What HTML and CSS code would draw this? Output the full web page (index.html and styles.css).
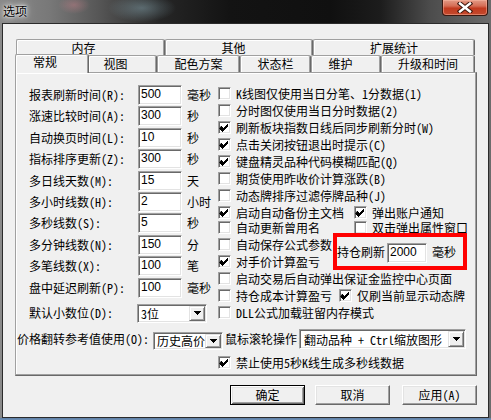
FILE: index.html
```html
<!DOCTYPE html>
<html>
<head>
<meta charset="utf-8">
<title>选项</title>
<link rel="stylesheet" href="styles.css">
</head>
<body>
<div class="window">
  <div class="titlebar">
    <span class="title">选项</span>
    <div class="close">
      <svg width="16" height="11" viewBox="0 0 16 11"><path d="M3 1.5 L13 9.5 M13 1.5 L3 9.5" stroke="#3b160d" stroke-width="4.4" stroke-linecap="square"/><path d="M3 1.5 L13 9.5 M13 1.5 L3 9.5" stroke="#fff" stroke-width="2.4" stroke-linecap="square"/></svg>
    </div>
  </div>
  <div class="client">
    <div class="tabs">
      <div class="tabrow row1">
        <div class="tab short">内存</div>
        <div class="tab short2">其他</div>
        <div class="tab">扩展统计</div>
      </div>
      <div class="tabrow row2">
        <div class="tab sel short">常规</div>
        <div class="tab short">视图</div>
        <div class="tab">配色方案</div>
        <div class="tab">状态栏</div>
        <div class="tab short2">维护</div>
        <div class="tab">升级和时间</div>
      </div>
      <div class="panel">
        <div class="cols">
          <div class="fields">
            <div class="frow"><span class="flabel">报表刷新时间(R):</span><span class="edit">500</span><span class="unit">毫秒</span></div>
            <div class="frow"><span class="flabel">涨速比较时间(A):</span><span class="edit">300</span><span class="unit">秒</span></div>
            <div class="frow"><span class="flabel">自动换页时间(L):</span><span class="edit">10</span><span class="unit">秒</span></div>
            <div class="frow"><span class="flabel">指标排序更新(Z):</span><span class="edit">300</span><span class="unit">秒</span></div>
            <div class="frow"><span class="flabel">多日线天数(M):</span><span class="edit">15</span><span class="unit">天</span></div>
            <div class="frow"><span class="flabel">多小时线数(H):</span><span class="edit">2</span><span class="unit">小时</span></div>
            <div class="frow"><span class="flabel">多秒线数(S):</span><span class="edit">5</span><span class="unit">秒</span></div>
            <div class="frow"><span class="flabel">多分钟线数(N):</span><span class="edit">150</span><span class="unit">分</span></div>
            <div class="frow"><span class="flabel">多笔线数(X):</span><span class="edit">100</span><span class="unit">笔</span></div>
            <div class="frow"><span class="flabel">盘中延迟刷新(P):</span><span class="edit">100</span><span class="unit">毫秒</span></div>
            <div class="frow drow"><span class="flabel">默认小数位(D):</span><span class="combo c-dec"><span class="ctext">3位</span><span class="dd"><svg width="7" height="4" viewBox="0 0 7 4"><path d="M0 0h7v1h-1v1h-1v1h-1v1h-1v-1h-1v-1h-1v-1h-1z"/></svg></span></span></div>
          </div>
          <div class="checks">
            <div class="crow"><label class="ck"><span class="cb"></span>K线图仅使用当日分笔、1分数据(1)</label></div>
            <div class="crow"><label class="ck"><span class="cb"></span>分时图仅使用当日分时数据(2)</label></div>
            <div class="crow"><label class="ck"><span class="cb"><svg class="mark" viewBox="0 0 13 13"><path d="M3 5h1v1h1v1h1v-1h1v-1h1v-1h1v-1h1v3h-1v1h-1v1h-1v1h-1v1h-1v1h-1v-1h-1v-1h-1v-1h-1z"/></svg></span>刷新板块指数日线后同步刷新分时(W)</label></div>
            <div class="crow"><label class="ck"><span class="cb"><svg class="mark" viewBox="0 0 13 13"><path d="M3 5h1v1h1v1h1v-1h1v-1h1v-1h1v-1h1v3h-1v1h-1v1h-1v1h-1v1h-1v1h-1v-1h-1v-1h-1v-1h-1z"/></svg></span>点击关闭按钮退出时提示(C)</label></div>
            <div class="crow"><label class="ck"><span class="cb"><svg class="mark" viewBox="0 0 13 13"><path d="M3 5h1v1h1v1h1v-1h1v-1h1v-1h1v-1h1v3h-1v1h-1v1h-1v1h-1v1h-1v1h-1v-1h-1v-1h-1v-1h-1z"/></svg></span>键盘精灵品种代码模糊匹配(Q)</label></div>
            <div class="crow"><label class="ck"><span class="cb"></span>期货使用昨收价计算涨跌(B)</label></div>
            <div class="crow"><label class="ck"><span class="cb"></span>动态牌排序过滤停牌品种(J)</label></div>
            <div class="crow"><label class="ck w136"><span class="cb"><svg class="mark" viewBox="0 0 13 13"><path d="M3 5h1v1h1v1h1v-1h1v-1h1v-1h1v-1h1v3h-1v1h-1v1h-1v1h-1v1h-1v1h-1v-1h-1v-1h-1v-1h-1z"/></svg></span>启动自动备份主文档</label><label class="ck"><span class="cb"><svg class="mark" viewBox="0 0 13 13"><path d="M3 5h1v1h1v1h1v-1h1v-1h1v-1h1v-1h1v3h-1v1h-1v1h-1v1h-1v1h-1v1h-1v-1h-1v-1h-1v-1h-1z"/></svg></span>弹出账户通知</label></div>
            <div class="crow r9"><label class="ck w136"><span class="cb"></span>自动更新曾用名</label><label class="ck"><span class="cb"></span>双击弹出属性窗口</label></div>
            <div class="crow"><label class="ck"><span class="cb"></span>自动保存公式参数</label></div>
            <div class="crow"><label class="ck"><span class="cb"><svg class="mark" viewBox="0 0 13 13"><path d="M3 5h1v1h1v1h1v-1h1v-1h1v-1h1v-1h1v3h-1v1h-1v1h-1v1h-1v1h-1v1h-1v-1h-1v-1h-1v-1h-1z"/></svg></span>对手价计算盈亏</label></div>
            <div class="crow"><label class="ck"><span class="cb"></span>启动交易后自动弹出保证金监控中心页面</label></div>
            <div class="crow"><label class="ck"><span class="cb"></span>持仓成本计算盈亏</label><label class="ck gap7"><span class="cb"><svg class="mark" viewBox="0 0 13 13"><path d="M3 5h1v1h1v1h1v-1h1v-1h1v-1h1v-1h1v3h-1v1h-1v1h-1v1h-1v1h-1v1h-1v-1h-1v-1h-1v-1h-1z"/></svg></span>仅刷当前显示动态牌</label></div>
            <div class="crow"><label class="ck"><span class="cb"></span>DLL公式加载驻留内存模式</label></div>
          </div>
        </div>
        <div class="brow">
          <span class="blabel1">价格翻转参考值使用(O):</span>
          <span class="combo c-hist"><span class="ctext">历史高价</span><span class="dd"><svg width="7" height="4" viewBox="0 0 7 4"><path d="M0 0h7v1h-1v1h-1v1h-1v1h-1v-1h-1v-1h-1v-1h-1z"/></svg></span></span>
          <span class="blabel2">鼠标滚轮操作:</span>
          <span class="combo c-wheel"><span class="ctext">翻动品种 + Ctrl缩放图形</span><span class="dd"><svg width="7" height="4" viewBox="0 0 7 4"><path d="M0 0h7v1h-1v1h-1v1h-1v1h-1v-1h-1v-1h-1v-1h-1z"/></svg></span></span>
        </div>
        <div class="crow lastrow"><label class="ck"><span class="cb"><svg class="mark" viewBox="0 0 13 13"><path d="M3 5h1v1h1v1h1v-1h1v-1h1v-1h1v-1h1v3h-1v1h-1v1h-1v1h-1v1h-1v1h-1v-1h-1v-1h-1v-1h-1z"/></svg></span>禁止使用5秒K线生成多秒线数据</label></div>
        <div class="hilite"><span>持仓刷新</span><span class="edit e2000">2000</span><span class="unit">毫秒</span></div>
      </div>
      <div class="buttons">
        <div class="btn def">确定</div>
        <div class="btn b2">取消</div>
        <div class="btn b3">应用(A)</div>
      </div>
    </div>
  </div>
</div>
</body>
</html>
```
FILE: styles.css
```css
* { box-sizing: border-box; }
html, body { margin: 0; padding: 0; }
body {
  width: 491px;
  height: 420px;
  overflow: hidden;
  background: #222;
  color: #000;
  font-family: "Noto Sans Mono CJK SC", "Noto Sans CJK SC", "DejaVu Sans", sans-serif;
  font-size: 12px;
  line-height: 14px;
}
.window {
  width: 491px;
  height: 420px;
  display: flex;
  flex-direction: column;
  background:
    linear-gradient(to top, #6f90b6 0, #5d7ea4 2px, transparent 2px),
    radial-gradient(ellipse 34px 14px at 142px 8px, rgba(130,160,170,.5), transparent),
    radial-gradient(ellipse 16px 9px at 74px 5px, rgba(210,130,140,.4), transparent),
    linear-gradient(90deg, #8a8a8a 0, #787878 50px, #555 100px, #262626 160px, #131313 230px, #101010 330px, #1c1c1c 380px, #4c4c4c 430px, #6c6c6c 491px);
}
.titlebar {
  height: 23px;
  flex: none;
  display: flex;
  justify-content: space-between;
  align-items: flex-start;
}
.title {
  margin: 4px 0 0 3px;
  font-size: 12px;
  line-height: 14px;
  color: #000;
  text-shadow: 0 0 5px #fff, 0 0 8px rgba(255,255,255,.8), 0 0 2px #fff;
}
.close {
  width: 46px;
  height: 16px;
  margin-right: 3px;
  border: 1px solid #3a1810;
  border-top: 0;
  border-radius: 0 0 4px 4px;
  background: linear-gradient(#e29a86 0, #d56d55 40%, #c13a1f 55%, #c44a2e 100%);
  box-shadow: inset 0 0 0 1px rgba(255,190,170,.45);
  display: flex;
  justify-content: center;
  align-items: center;
}
.client {
  flex: 1;
  margin: 0 2px 2px 2px;
  border: 1px solid #2b2b2b;
  background: #f0f0f0;
}
.tabs {
  margin: 15px 0 0 12px;
  width: 462px;
}
.tabrow {
  display: grid;
  margin-left: 1px;
  width: 459px;
}
.row1 { grid-template-columns: 149px 148px 162px; height: 16px; }
.row2 { grid-template-columns: 72px 69px 83px 71px 70px 94px; height: 17px; }
.tab {
  border-top: 1px solid #a0a0a0;
  border-left: 1px solid #a0a0a0;
  border-right: 1px solid #696969;
  border-radius: 2px 2px 0 0;
  box-shadow: inset -1px 0 #a0a0a0, inset 1px 1px #fff;
  background: #f0f0f0;
  text-align: center;
  line-height: 15px;
}
.row2 .tab { line-height: 16px; }
.tab.short { padding-right: 14px; }
.tab.short2 { padding-right: 11px; }
.row2 .tab.sel {
  margin: -1px -1px -1px -1px;
  position: relative;
  z-index: 1;
  line-height: 14px;
}
.panel {
  position: relative;
  height: 304px;
  border: 1px solid;
  border-color: #a0a0a0 #696969 #696969 #a0a0a0;
  box-shadow: inset -1px -1px #a0a0a0, inset 1px 1px #fff;
}
.cols { display: flex; }
.fields {
  width: 202px;
  flex: none;
  padding: 12px 0 0 13px;
  display: flex;
  flex-direction: column;
  gap: 1.4px;
}
.frow {
  display: flex;
  align-items: center;
  height: 20px;
}
.flabel { width: 109px; flex: none; white-space: nowrap; }
.edit {
  display: block;
  width: 44px;
  height: 20px;
  flex: none;
  background: #fff;
  border: 1px solid;
  border-color: #a0a0a0 #fff #fff #a0a0a0;
  box-shadow: inset 1px 1px #696969, inset -1px -1px #e3e3e3;
  padding-left: 2px;
  line-height: 17px;
  font-family: "Liberation Sans", "Noto Sans CJK SC", sans-serif;
}
.unit { margin-left: 5px; white-space: nowrap; }
.drow { margin-top: 5px; height: 19px; }
.combo {
  display: flex;
  align-items: stretch;
  background: #fff;
  border: 1px solid;
  border-color: #a0a0a0 #fff #fff #a0a0a0;
  box-shadow: inset 1px 1px #696969, inset -1px -1px #e3e3e3;
  padding: 1px;
}
.ctext {
  flex: 1;
  padding-left: 2px;
  white-space: nowrap;
  display: flex;
  align-items: center;
  line-height: 13px;
}
.dd {
  width: 16px;
  flex: none;
  background: #f0f0f0;
  border: 1px solid;
  border-color: #e3e3e3 #696969 #696969 #e3e3e3;
  box-shadow: inset 1px 1px #fff, inset -1px -1px #a0a0a0;
  display: flex;
  justify-content: center;
  align-items: center;
}
.c-dec { width: 70px; height: 19px; margin-left: -1px; }
.checks { padding-top: 12px; flex: 1; }
.crow {
  display: flex;
  align-items: center;
  height: 17px;
}
.r9 { margin-top: -2px; }
.ck {
  display: flex;
  align-items: center;
  white-space: nowrap;
  line-height: 13px;
}
.w136 { width: 136px; flex: none; }
.gap7 { margin-left: 7px; }
.cb {
  position: relative;
  width: 13px;
  height: 13px;
  flex: none;
  margin-right: 5px;
  background: #fff;
  border: 1px solid;
  border-color: #a0a0a0 #fff #fff #a0a0a0;
  box-shadow: inset 1px 1px #696969, inset -1px -1px #e3e3e3;
}
.mark {
  position: absolute;
  left: -1px;
  top: -1px;
  width: 13px;
  height: 13px;
}
.brow {
  display: flex;
  align-items: center;
  height: 21px;
  margin-top: 6px;
  padding-left: 1px;
}
.blabel1 { width: 136px; flex: none; white-space: nowrap; }
.c-hist { width: 70px; height: 18px; margin-top: 3px; }
.blabel2 { width: 74px; margin-left: 2px; flex: none; white-space: nowrap; }
.c-wheel { width: 167px; height: 20px; }
.c-wheel .ctext { padding-left: 3px; }
.lastrow { margin-top: 4px; padding-left: 202px; }
.hilite {
  position: absolute;
  left: 317px;
  top: 160px;
  width: 134px;
  height: 37px;
  border: 4px solid #f00;
  display: flex;
  align-items: center;
  white-space: nowrap;
}
.e2000 { width: 40px; margin-left: 2px; margin-top: 2px; }
.buttons {
  display: flex;
  justify-content: flex-end;
  margin-top: 9px;
}
.btn {
  width: 75px;
  height: 20px;
  background: #f0f0f0;
  border: 1px solid;
  border-color: #fff #696969 #696969 #fff;
  box-shadow: inset -1px -1px #a0a0a0, inset 1px 1px #e3e3e3;
  text-align: center;
  line-height: 17px;
}
.btn.def {
  border-color: #000;
  box-shadow: inset 1px 1px #fff, inset -1px -1px #696969, inset 2px 2px #e3e3e3, inset -2px -2px #a0a0a0;
}
.b2 { margin-left: 10px; }
.b3 { margin-left: 12px; }
```
